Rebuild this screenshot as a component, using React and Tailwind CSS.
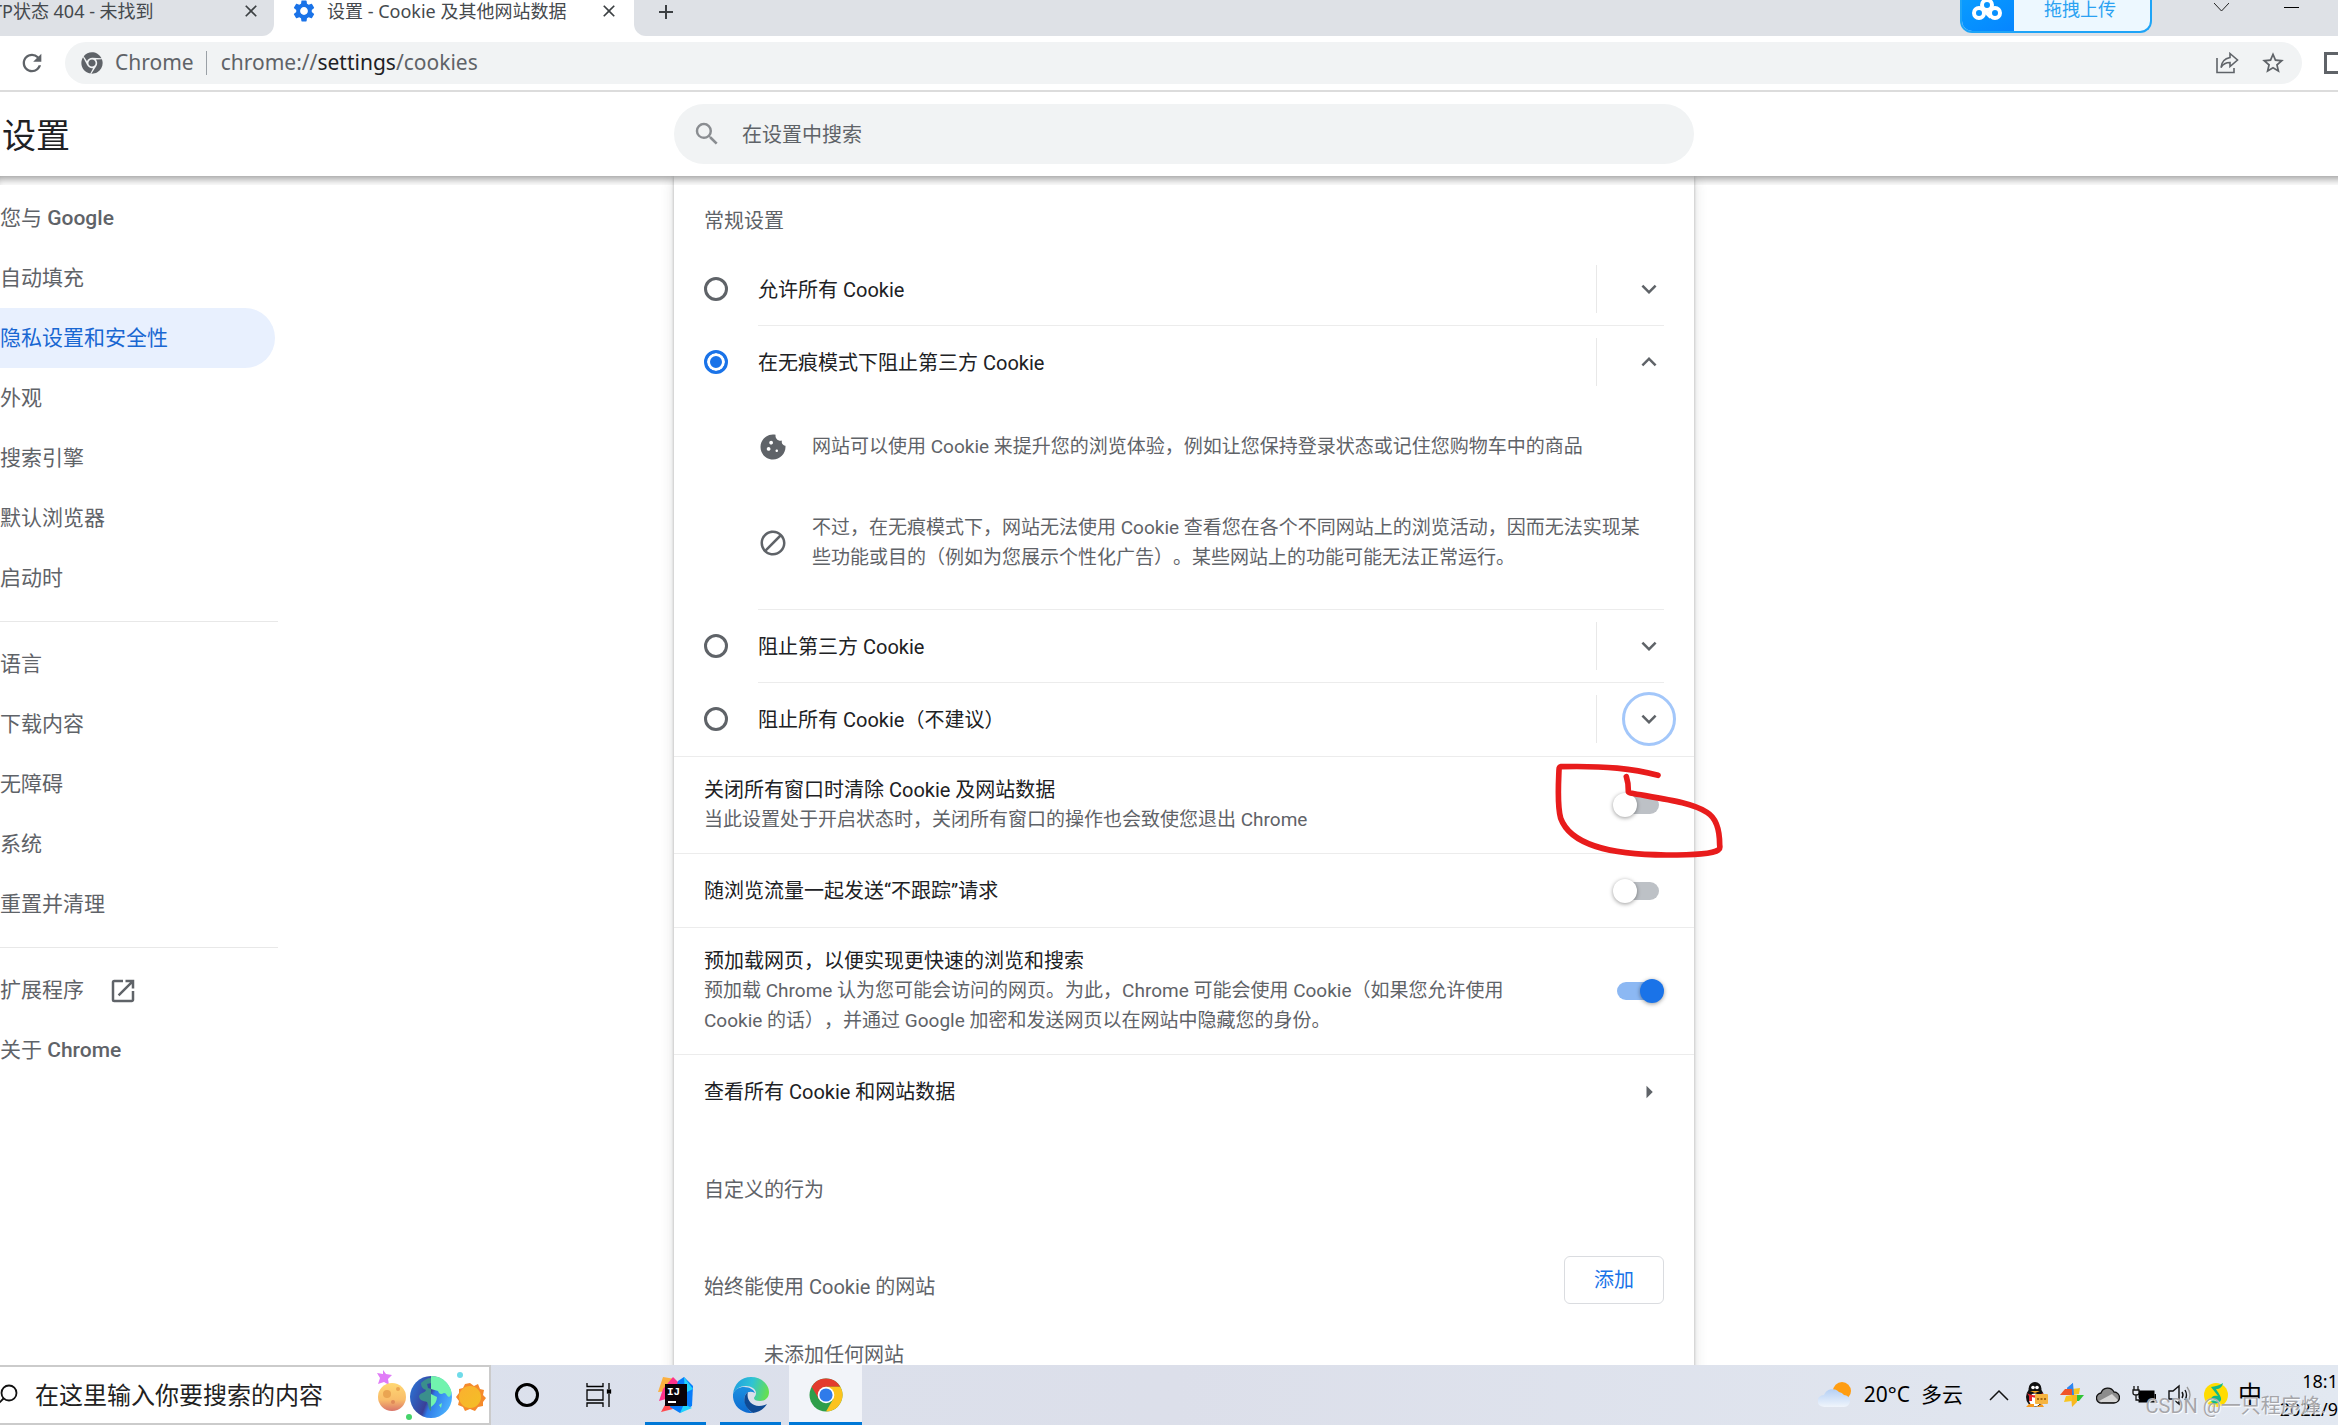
// src/App.jsx
import { useState } from "react";
import {
  MdAdd,
  MdArrowRight,
  MdBlock,
  MdClose,
  MdCookie,
  MdExpandLess,
  MdExpandMore,
  MdOpenInNew,
  MdRefresh,
  MdSearch,
  MdSettings,
  MdStarBorder,
} from "react-icons/md";
import { FaChrome } from "react-icons/fa";

const NAV_GROUPS = [
  [
    "您与 Google",
    "自动填充",
    "隐私设置和安全性",
    "外观",
    "搜索引擎",
    "默认浏览器",
    "启动时",
  ],
  ["语言", "下载内容", "无障碍", "系统", "重置并清理"],
  ["扩展程序", "关于 Chrome"],
];

const COOKIE_OPTIONS = [
  { id: "allow", label: "允许所有 Cookie" },
  { id: "incognito", label: "在无痕模式下阻止第三方 Cookie" },
  { id: "third-party", label: "阻止第三方 Cookie" },
  { id: "block", label: "阻止所有 Cookie（不建议）" },
];

/* ---------- Browser window ---------- */

const CloudDriveLogo = () => (
  <svg width="32" height="24" viewBox="0 0 32 24" fill="none" stroke="#fff" strokeWidth="4">
    <circle cx="16" cy="5" r="5" />
    <circle cx="8" cy="13" r="5" />
    <circle cx="24" cy="13" r="5" />
    <path d="M12 9l8 8" />
  </svg>
);

const TabStrip = () => (
  <div className="flex h-9 shrink-0 overflow-hidden bg-white font-['Noto_Sans','Noto_Sans_CJK_SC',sans-serif]">
    <div className="flex w-[274px] shrink-0 items-center justify-between rounded-br-xl bg-[#dee1e6] pr-[13px] pb-[14px]">
      <span className="-ml-2 text-[18px] leading-[22px] whitespace-nowrap text-[#45494d]">
        TP状态 404 - 未找到
      </span>
      <button aria-label="关闭标签页" className="text-[20px] text-[#3c4043]">
        <MdClose />
      </button>
    </div>
    <div className="flex w-[360px] shrink-0 items-center pr-[15px] pb-[14px] pl-[17px]">
      <MdSettings className="mr-[10px] text-[26px] text-[#1a73e8]" />
      <span className="flex-1 text-[18px] leading-[22px] whitespace-nowrap text-[#45494d]">
        设置 - Cookie 及其他网站数据
      </span>
      <button aria-label="关闭标签页" className="text-[20px] text-[#3c4043]">
        <MdClose />
      </button>
    </div>
    <div className="flex flex-1 rounded-bl-xl bg-[#dee1e6] pl-5">
      <button aria-label="新标签页" className="h-[22px] text-[24px] text-[#3c4043]">
        <MdAdd />
      </button>
      <button className="ml-auto flex h-[33px] w-48 overflow-hidden rounded-b-xl border-2 border-t-0 border-[#1ea4f7] bg-[#edf8ff]">
        <span className="-ml-0.5 flex h-[33px] w-[54px] items-start justify-center bg-linear-to-br from-[#0a9cff] to-[#0784ff]">
          <CloudDriveLogo />
        </span>
        <span className="flex-1 pr-1 text-center text-[18px] leading-[18px] text-[#2ba2f2]">
          拖拽上传
        </span>
      </button>
      <div className="mr-[39px] ml-[62px] flex gap-[55px] pt-px">
        <button aria-label="搜索标签页" className="h-3">
          <svg width="15" height="10" viewBox="0 0 15 10" fill="none" stroke="#222">
            <path d="M0 1l7.500 8L15 1" />
          </svg>
        </button>
        <button aria-label="最小化" className="h-3">
          <svg width="15" height="10" viewBox="0 0 15 10" stroke="#000">
            <path d="M0 5.500h15" />
          </svg>
        </button>
      </div>
    </div>
  </div>
);

const Toolbar = () => (
  <div className="flex h-14 shrink-0 items-center overflow-hidden border-b-2 border-[#dcdcdc] bg-white pl-[18px]">
    <button aria-label="重新加载" className="text-[28px] text-[#5f6368]">
      <MdRefresh />
    </button>
    <div className="ml-[19px] flex h-[42px] flex-1 items-center rounded-full bg-[#f1f3f4] px-4">
      <FaChrome className="text-[22px] text-[#5f6368]" />
      <span className="ml-3 font-['Noto_Sans'] text-[21px] text-[#5f6368]">Chrome</span>
      <span className="mr-[14px] ml-3 h-6 w-px bg-[#9aa0a6]" />
      <span className="font-['Noto_Sans'] text-[21px] text-[#5f6368]">
        chrome://<span className="text-[#202124]">settings</span>/cookies
      </span>
      <button aria-label="分享" className="ml-auto">
        <svg width="24" height="22" viewBox="0 0 24 22" fill="none" stroke="#5f6368" strokeWidth="1.600">
          <path d="M2 6v14.500h17V16" />
          <path d="M15 1.500l7.500 6.500-7.500 6.500v-4c-4 0-7 1.500-9 5 .5-6 4-9 9-10z" />
        </svg>
      </button>
      <button aria-label="为此标签页添加书签" className="ml-[21px] text-[26px] text-[#5f6368]">
        <MdStarBorder />
      </button>
    </div>
    <button aria-label="侧边栏" className="-mr-2 ml-[22px] h-[22px] w-[22px] border-[3px] border-[#5f6368]" />
  </div>
);

/* ---------- Settings page ---------- */

const SettingsHeader = () => (
  <header className="relative z-10 -mr-[30px] grid h-[84px] shrink-0 grid-cols-[minmax(0,1fr)_1020px_minmax(0,1fr)] items-center bg-white">
    <h1 className="pt-1 pl-0.5 text-[34px] text-[#202124]">设置</h1>
    <label className="flex h-[60px] items-center rounded-full bg-[#f1f3f4] pl-[18px]">
      <MdSearch className="text-[30px] text-[#8a8d91]" />
      <input
        type="search"
        aria-label="在设置中搜索"
        placeholder="在设置中搜索"
        className="ml-5 flex-1 bg-transparent pt-0.5 text-[20px] outline-none placeholder:text-[#5f6368]"
      />
    </label>
    <div className="absolute inset-x-0 top-full h-[9px] shadow-[inset_0_8px_9px_-5px_rgba(0,0,0,0.4)]" />
  </header>
);

const NavLabel = ({ text }) => {
  const [cjk, latin] = text.split(" ");
  return (
    <span>
      {cjk}
      {latin && <span className="font-medium"> {latin}</span>}
    </span>
  );
};

const Sidebar = () => (
  <nav className="w-[278px] pt-3">
    {NAV_GROUPS.map((group, i) => (
      <div key={i}>
        {i > 0 && <hr className="mt-[13px] mb-3 border-[#e8e8e8]" />}
        {group.map((item) => (
          <a
            key={item}
            href="#"
            className={`flex h-[60px] w-[275px] items-center gap-6 rounded-r-full pt-0.5 text-[21px] ${
              item === "隐私设置和安全性"
                ? "bg-[#e8f0fe] text-[#1967d2]"
                : "text-[#5f6368]"
            }`}
          >
            <NavLabel text={item} />
            {item === "扩展程序" && <MdOpenInNew className="text-[30px]" />}
          </a>
        ))}
      </div>
    ))}
  </nav>
);

const IncognitoDetails = () => (
  <div className="flex flex-col gap-[51px] pt-[34px] pb-9 text-[19px] leading-[30px] text-[#5f6368]">
    <div className="flex items-center gap-6">
      <MdCookie className="w-[30px] shrink-0 text-[30px]" />
      <p>网站可以使用 Cookie 来提升您的浏览体验，例如让您保持登录状态或记住您购物车中的商品</p>
    </div>
    <div className="flex items-center gap-6">
      <MdBlock className="w-[30px] shrink-0 text-[30px]" />
      <p>
        不过，在无痕模式下，网站无法使用 Cookie 查看您在各个不同网站上的浏览活动，因而无法实现某
        <br />
        些功能或目的（例如为您展示个性化广告）。某些网站上的功能可能无法正常运行。
      </p>
    </div>
  </div>
);

const CookieOption = ({ option, checked, expanded, focused, last, onSelect, onToggle }) => (
  <div className="flex items-start px-[30px]">
    <input
      type="radio"
      name="cookies"
      id={option.id}
      checked={checked}
      onChange={onSelect}
      className="mt-6 mr-[30px] size-6 shrink-0 appearance-none rounded-full border-[3px] border-[#5f6368] checked:border-[#1a73e8] checked:bg-[#1a73e8] checked:shadow-[inset_0_0_0_3px_#fff]"
    />
    <div className={`flex-1 ${last ? "pb-px" : "border-b border-[#ececec]"}`}>
      <div className="flex h-[72px] items-center">
        <label htmlFor={option.id} className="flex-1 pt-0.5 text-[20px] text-[#202124]">
          {option.label}
        </label>
        <span className="h-12 w-px bg-[#e8e8e8]" />
        <button
          aria-label="展开"
          onClick={onToggle}
          className={`-mr-3 ml-[25px] flex size-[54px] items-center justify-center rounded-full border-[3px] text-[30px] text-[#5f6368] ${
            focused ? "border-[#a3c7fa]" : "border-transparent"
          }`}
        >
          {expanded ? <MdExpandLess /> : <MdExpandMore />}
        </button>
      </div>
      {expanded && <IncognitoDetails />}
    </div>
  </div>
);

const ToggleRow = ({ id, label, description, defaultChecked, children }) => (
  <div className="relative flex min-h-[74px] items-center border-t border-[#ececec] px-[30px] py-[18px]">
    <label htmlFor={id} className="flex-1 leading-[30px]">
      <span className="block text-[20px] text-[#202124]">{label}</span>
      {description && (
        <span className="block text-[19px] text-[#5f6368]">{description}</span>
      )}
    </label>
    <input
      type="checkbox"
      role="switch"
      id={id}
      defaultChecked={defaultChecked}
      className="relative mr-[5px] h-[18px] w-[42px] shrink-0 appearance-none rounded-full bg-[#bdc1c6] before:absolute before:-top-[3px] before:-left-1 before:size-6 before:rounded-full before:bg-white before:shadow-[0_1px_4px_rgba(0,0,0,0.4)] checked:bg-[#8cb8f3] checked:before:left-[23px] checked:before:bg-[#1a73e8]"
    />
    {children}
  </div>
);

// Hand-drawn marker around the first switch
const RedMarker = () => (
  <svg
    className="pointer-events-none absolute top-[3px] -right-[29px] z-10"
    width="170"
    height="100"
    viewBox="160 480 510 300"
    fill="none"
    stroke="#e81c1c"
    strokeWidth="17"
    strokeLinecap="round"
    strokeLinejoin="round"
  >
    <path d="M475 526C400 506 320 497 184 500Q178 501 178 510C176 560 172 615 183 655C212 735 330 764 500 765C585 765 640 762 657 749Q662 746 660 735C660 690 652 655 622 637C575 608 510 600 392 579Q385 578 386 572Q386 548 380 530" />
  </svg>
);

const CookieCard = () => {
  const [selected, setSelected] = useState("incognito");
  const [expanded, setExpanded] = useState("incognito");

  return (
    <main className="bg-white pt-[30px] shadow-[0_1px_3px_rgba(60,64,67,0.35),0_3px_12px_rgba(60,64,67,0.18)]">
      <h2 className="mb-[17px] px-[30px] text-[20px] leading-[30px] text-[#5f6368]">常规设置</h2>
      {COOKIE_OPTIONS.map((option, i) => (
        <CookieOption
          key={option.id}
          option={option}
          checked={selected === option.id}
          expanded={expanded === option.id}
          focused={option.id === "block"}
          last={i === COOKIE_OPTIONS.length - 1}
          onSelect={() => setSelected(option.id)}
          onToggle={() => setExpanded(expanded === option.id ? null : option.id)}
        />
      ))}

      <ToggleRow
        id="clear-on-exit"
        label="关闭所有窗口时清除 Cookie 及网站数据"
        description="当此设置处于开启状态时，关闭所有窗口的操作也会致使您退出 Chrome"
      >
        <RedMarker />
      </ToggleRow>
      <ToggleRow id="do-not-track" label="随浏览流量一起发送“不跟踪”请求" />
      <ToggleRow
        id="preload"
        label="预加载网页，以便实现更快速的浏览和搜索"
        description={
          <>
            预加载 Chrome 认为您可能会访问的网页。为此，Chrome 可能会使用 Cookie（如果您允许使用
            <br />
            Cookie 的话），并通过 Google 加密和发送网页以在网站中隐藏您的身份。
          </>
        }
        defaultChecked
      />
      <a
        href="#"
        className="flex h-[74px] items-center justify-between border-t border-[#ececec] px-[30px] text-[20px] text-[#202124]"
      >
        查看所有 Cookie 和网站数据
        <MdArrowRight className="text-[30px] text-[#5f6368]" />
      </a>

      <div className="px-[30px] pt-[47px] text-[20px] leading-[30px] text-[#5f6368]">
        <h2>自定义的行为</h2>
        <div className="mt-[51px] flex items-end justify-between">
          <h3 className="pb-0.5">始终能使用 Cookie 的网站</h3>
          <button className="h-12 w-[100px] rounded-md border border-[#dadce0] text-[#1a73e8]">
            添加
          </button>
        </div>
        <p className="mt-9 pb-10 pl-[60px]">未添加任何网站</p>
      </div>
    </main>
  );
};

/* ---------- Taskbar ---------- */

const PlanetsArt = () => (
  <svg className="mr-[3px] shrink-0" width="112" height="52" viewBox="0 0 112 52">
    <defs>
      <linearGradient id="moon" x1="0" y1="0" x2="0" y2="1">
        <stop offset="0" stopColor="#ffd873" />
        <stop offset="0.6" stopColor="#f9bd6a" />
        <stop offset="1" stopColor="#d9746a" />
      </linearGradient>
      <linearGradient id="ocean" x1="0" y1="0.300" x2="1" y2="0.700">
        <stop offset="0" stopColor="#2c6fd0" />
        <stop offset="0.450" stopColor="#3a3f98" />
        <stop offset="0.550" stopColor="#2f7be8" />
        <stop offset="1" stopColor="#4db6ff" />
      </linearGradient>
      <linearGradient id="sun" x1="0" y1="0" x2="1" y2="1">
        <stop offset="0" stopColor="#fbb030" />
        <stop offset="1" stopColor="#f3bf25" />
      </linearGradient>
    </defs>
    <path d="M9 1l3 4 6 1-4 4 1 6-5-3-6 2 2-6-3-5 6 1z" fill="#e07cf7" />
    <circle cx="86" cy="6" r="3" fill="#6fdbe9" />
    <circle cx="35" cy="48" r="3" fill="#45d46a" />
    <circle cx="18" cy="28" r="14" fill="url(#moon)" />
    <circle cx="13" cy="25" r="4" fill="#eaa552" />
    <circle cx="24" cy="20" r="2" fill="#eaa552" />
    <circle cx="19" cy="33" r="2" fill="#e08a58" />
    <circle cx="57" cy="28" r="21" fill="url(#ocean)" />
    <path d="M47 14c3-3 6-5 10-5v5l-4 1 1 4 3 1v22c-3-2-2-6-4-9-4-1-8-2-8-6 2-4 6-3 7-6-2-1-5-2-5-7z" fill="#3a8f8c" />
    <path d="M57 7c9 0 16 4 20 14 1 3 0 6-2 7-3-1-2-4-5-4-3 2-5 1-6-2l-7-2zM57 25l6 3c0 4-2 7-6 10zM65 36l3-2-1 5z" fill="#71f3ae" />
    <path
      d="M96 14l4 3 4-2 2 5 4 1-1 5 3 3-3 4 0 4-5 1-3 4-5-2-5 2-2-4-5-2 1-4-3-4 3-4 0-4 4-1 2-4z"
      fill="#f58a2c"
    />
    <circle cx="96" cy="28" r="11" fill="url(#sun)" />
  </svg>
);

const IdeaIcon = () => (
  <svg width="36" height="36" viewBox="0 0 36 36">
    <path d="M5 0l12 2-5 12L0 15z" fill="#fcb040" />
    <path d="M15 0l6 6-6 14L1 24l4-12z" fill="#ff318c" />
    <path d="M1 14l8 10-6 11 12-3z" fill="#fe4a4f" />
    <path d="M20 4l6-4 9 9-1 20-12 7-10-6z" fill="#087cfa" />
    <path d="M26 0l9 12-8 4zM22 36l4-9 8 4z" fill="#21d4fd" />
    <rect x="7" y="7" width="22" height="22" fill="#0a0208" />
    <text x="9" y="18" fontFamily="'Liberation Mono', monospace" fontWeight="700" fontSize="11" fill="#fff">
      IJ
    </text>
    <rect x="10" y="24" width="8" height="2" fill="#fff" />
  </svg>
);

const EdgeIcon = () => (
  <svg width="36" height="36" viewBox="0 0 36 36">
    <defs>
      <linearGradient id="edge-top" x1="0" y1="0.300" x2="1" y2="0.500">
        <stop offset="0" stopColor="#1f9fe0" />
        <stop offset="0.5" stopColor="#2fc3d4" />
        <stop offset="1" stopColor="#66e04f" />
      </linearGradient>
      <linearGradient id="edge-left" x1="0" y1="0" x2="0" y2="1">
        <stop offset="0" stopColor="#1b8fe0" />
        <stop offset="1" stopColor="#0d6ad0" />
      </linearGradient>
    </defs>
    <path d="M0 17C1 7 8 0 18 0c11 0 18 8 18 15 0 6-4 9-9 9-4 0-6-1-6-3 0-1 2-2 2-5 0-4-5-7-10-7C7 9 2 12 0 17z" fill="url(#edge-top)" />
    <path d="M0 17c2-5 6-7 11-7 6 0 10 3 11 6-8-4-12 3-10 9 2 7 6 10 8 11C8 37-1 28 0 17z" fill="url(#edge-left)" />
    <path d="M15 15c-6 4-5 15 5 21 6-1 11-4 14-9-2 1-5 2-8 2-8 0-13-7-11-14z" fill="#0f4a94" />
  </svg>
);

const ChromeIcon = () => (
  <svg width="34" height="34" viewBox="-17 -17 34 34">
    <circle r="16.500" fill="#2f9e4a" />
    <path d="M-14.300-8.300A16.500 16.500 0 0 1 14.300-8.300L0-8.300-7.200 4z" fill="#e33b2e" />
    <path d="M14.300-8.300A16.500 16.500 0 0 1 0 16.500L7.200 4 0-8.300z" fill="#fcc31e" />
    <circle r="8.300" fill="#fff" />
    <circle r="6.600" fill="#2f7bea" />
  </svg>
);

const WeatherIcon = () => (
  <svg width="34" height="26" viewBox="0 0 34 26">
    <defs>
      <linearGradient id="cloud" x1="0" y1="0" x2="0" y2="1">
        <stop offset="0" stopColor="#b4cff4" />
        <stop offset="1" stopColor="#f0f5fc" />
      </linearGradient>
    </defs>
    <circle cx="24" cy="9" r="9" fill="#ff9d12" />
    <path d="M7 25a7 6 0 0 1-1-12 9 9 0 0 1 15-3 8 8 0 0 1 5 3 6 6 0 0 1 0 12z" fill="url(#cloud)" />
  </svg>
);

const QQIcon = () => (
  <svg width="24" height="26" viewBox="0 0 24 26">
    <ellipse cx="11" cy="15" rx="9" ry="10" fill="#111" />
    <ellipse cx="11" cy="7" rx="6.500" ry="7" fill="#111" />
    <ellipse cx="11" cy="18" rx="6" ry="6.500" fill="#fff" />
    <circle cx="9" cy="5.500" r="1.800" fill="#fff" />
    <circle cx="13" cy="5.500" r="1.800" fill="#fff" />
    <path d="M6 9h10l-5 2z" fill="#f5a623" />
    <path d="M3 11c5 3 11 3 16 0v3c-5 2-8 2-11 1v4H5v-5z" fill="#e3222b" />
    <path d="M2 25h8v-3H5zM12 25h8l-2-3z" fill="#f79a1e" />
    <rect x="11" y="12" width="13" height="10" rx="1" fill="#f6b440" />
    <path d="M13 17h2m1.500 0h2m1.500 0h2" stroke="#8a4d00" strokeWidth="1.500" />
  </svg>
);

const PinwheelIcon = () => (
  <svg width="24" height="24" viewBox="0 0 24 24">
    <path d="M13 0v12H7V5z" fill="#2f86f0" />
    <path d="M20 5l-1 6-7 1V6z" fill="#f8c51f" />
    <path d="M24 12l-5 6h-7v-6z" fill="#2fc436" />
    <path d="M12 24l-1-12h6v7z" fill="#f8b81f" />
    <path d="M0 12l5-6h7v6z" fill="#f0532a" />
    <path d="M4 19l2-6 6-1v6z" fill="#f8c51f" />
    <path d="M13 0l-6 5h5v7h2z" fill="#2f86f0" />
  </svg>
);

const SystemTray = () => (
  <div className="relative flex h-full shrink-0 items-center overflow-hidden">
    <WeatherIcon />
    <span className="ml-3 font-['Noto_Sans','Noto_Sans_CJK_SC',sans-serif] text-[21px] whitespace-nowrap text-black">
      20°C&nbsp; 多云
    </span>
    <button aria-label="显示隐藏的图标" className="mr-[15px] ml-[26px]">
      <svg width="20" height="12" viewBox="0 0 20 12" fill="none" stroke="#111" strokeWidth="1.500">
        <path d="M1 11l9-9 9 9" />
      </svg>
    </button>
    <div className="flex items-center gap-3">
      <QQIcon />
      <PinwheelIcon />
      <svg width="24" height="18" viewBox="0 0 24 18">
        <path d="M6 17a5 5 0 0 1-1-10 7 7 0 0 1 13-1 5.500 5.500 0 0 1 0 11z" fill="#8c8c8c" stroke="#111" strokeWidth="1.300" />
        <path d="M3 15L16 8l6 6-2 2H5z" fill="#d5d5d5" />
      </svg>
      <svg width="24" height="20" viewBox="0 0 24 20">
        <rect x="7" y="6" width="15" height="11" fill="#000" stroke="#000" />
        <rect x="22.500" y="9" width="1.500" height="5" fill="#000" />
        <path d="M2 1v4M6 1v4M1 5h6v3q0 2-3 2t-3-2zM4 10v5h4" fill="#e4e8f1" stroke="#111" strokeWidth="1.300" />
      </svg>
      <svg width="24" height="22" viewBox="0 0 24 22" fill="none" stroke="#111" strokeWidth="1.400">
        <path d="M1 7h4l6-5v18l-6-5H1z" />
        <path d="M14 8q2 3 0 6M17 6q3 5 0 10" />
        <path d="M19 3q6 8 0 16" stroke="#999" />
      </svg>
      <svg width="24" height="24" viewBox="0 0 24 24">
        <circle cx="12" cy="12" r="12" fill="#ffdc00" />
        <path d="M19 0c-4 3-8 3-12 4l7 9c-4-1-8 1-7 5 1 3 8 4 10-1 1-3-4-9-5-11 4 0 6-2 7-6z" fill="#12b886" />
      </svg>
    </div>
    <span className="ml-[10px] text-[24px] leading-[30px] text-black">中</span>
    <div className="ml-[14px] w-[62px] text-right font-['Noto_Sans'] text-[18px] leading-7 text-black">
      <div>18:1</div>
      <div>2022/9</div>
    </div>
    <span className="absolute right-3 bottom-[7px] text-[20px] leading-6 whitespace-nowrap text-[#a6a6aa] [text-shadow:1px_1px_1px_#fff]">
      CSDN @一只程序烽.
    </span>
  </div>
);

const Taskbar = () => (
  <footer className="relative z-20 flex h-[60px] shrink-0 items-center overflow-hidden bg-linear-to-r from-[#dbe2ee] via-[#dcdfea] to-[#e2e8f1]">
    <label className="flex h-full w-[491px] shrink-0 items-center border-2 border-l-0 border-[#cbcbcb] bg-white">
      <svg className="shrink-0" width="18" height="22" viewBox="0 0 18 22" fill="none" stroke="#111" strokeWidth="1.800">
        <circle cx="9" cy="9" r="7.500" />
        <path d="M4 14l-6 6" />
      </svg>
      <input
        type="text"
        aria-label="搜索"
        placeholder="在这里输入你要搜索的内容"
        className="ml-[17px] min-w-0 flex-1 bg-transparent pt-0.5 text-[24px] outline-none placeholder:text-[#222]"
      />
      <PlanetsArt />
    </label>
    <button aria-label="Cortana" className="mx-6 size-6 rounded-full border-[3px] border-black" />
    <button aria-label="任务视图" className="ml-[23px]">
      <svg width="26" height="24" viewBox="0 0 26 24" fill="none" stroke="#000" strokeWidth="1.300">
        <path d="M1 0v3.500h16V0M1 24v-4h16v4M1 7h16v10H1zM23 0v6M23 11v13" />
        <rect x="21.500" y="7" width="3" height="3" fill="#000" />
      </svg>
    </button>
    <button
      aria-label="IntelliJ IDEA"
      className="ml-[33px] flex h-full w-[61px] items-center justify-center border-y-[3px] border-t-transparent border-b-[#0078d7]"
    >
      <IdeaIcon />
    </button>
    <button
      aria-label="Microsoft Edge"
      className="ml-[14px] flex h-full w-[61px] items-center justify-center border-y-[3px] border-t-transparent border-b-[#0078d7]"
    >
      <EdgeIcon />
    </button>
    <button
      aria-label="Google Chrome"
      className="ml-2 flex h-full w-[73px] items-center justify-center border-y-[3px] border-t-[#f2f4f9] border-b-[#0078d7] bg-[#f2f4f9]"
    >
      <ChromeIcon />
    </button>
    <div className="flex-1" />
    <SystemTray />
  </footer>
);

const App = () => {
  return (
    <div className="flex h-screen flex-col overflow-hidden bg-white font-['Roboto','Noto_Sans_CJK_SC',sans-serif] [text-spacing-trim:space-all]">
      <TabStrip />
      <Toolbar />
      <SettingsHeader />
      <div className="-mr-[30px] grid min-h-0 flex-1 grid-cols-[minmax(0,1fr)_1020px_minmax(0,1fr)] items-start overflow-hidden">
        <Sidebar />
        <CookieCard />
      </div>
      <Taskbar />
    </div>
  );
};

export default App;
